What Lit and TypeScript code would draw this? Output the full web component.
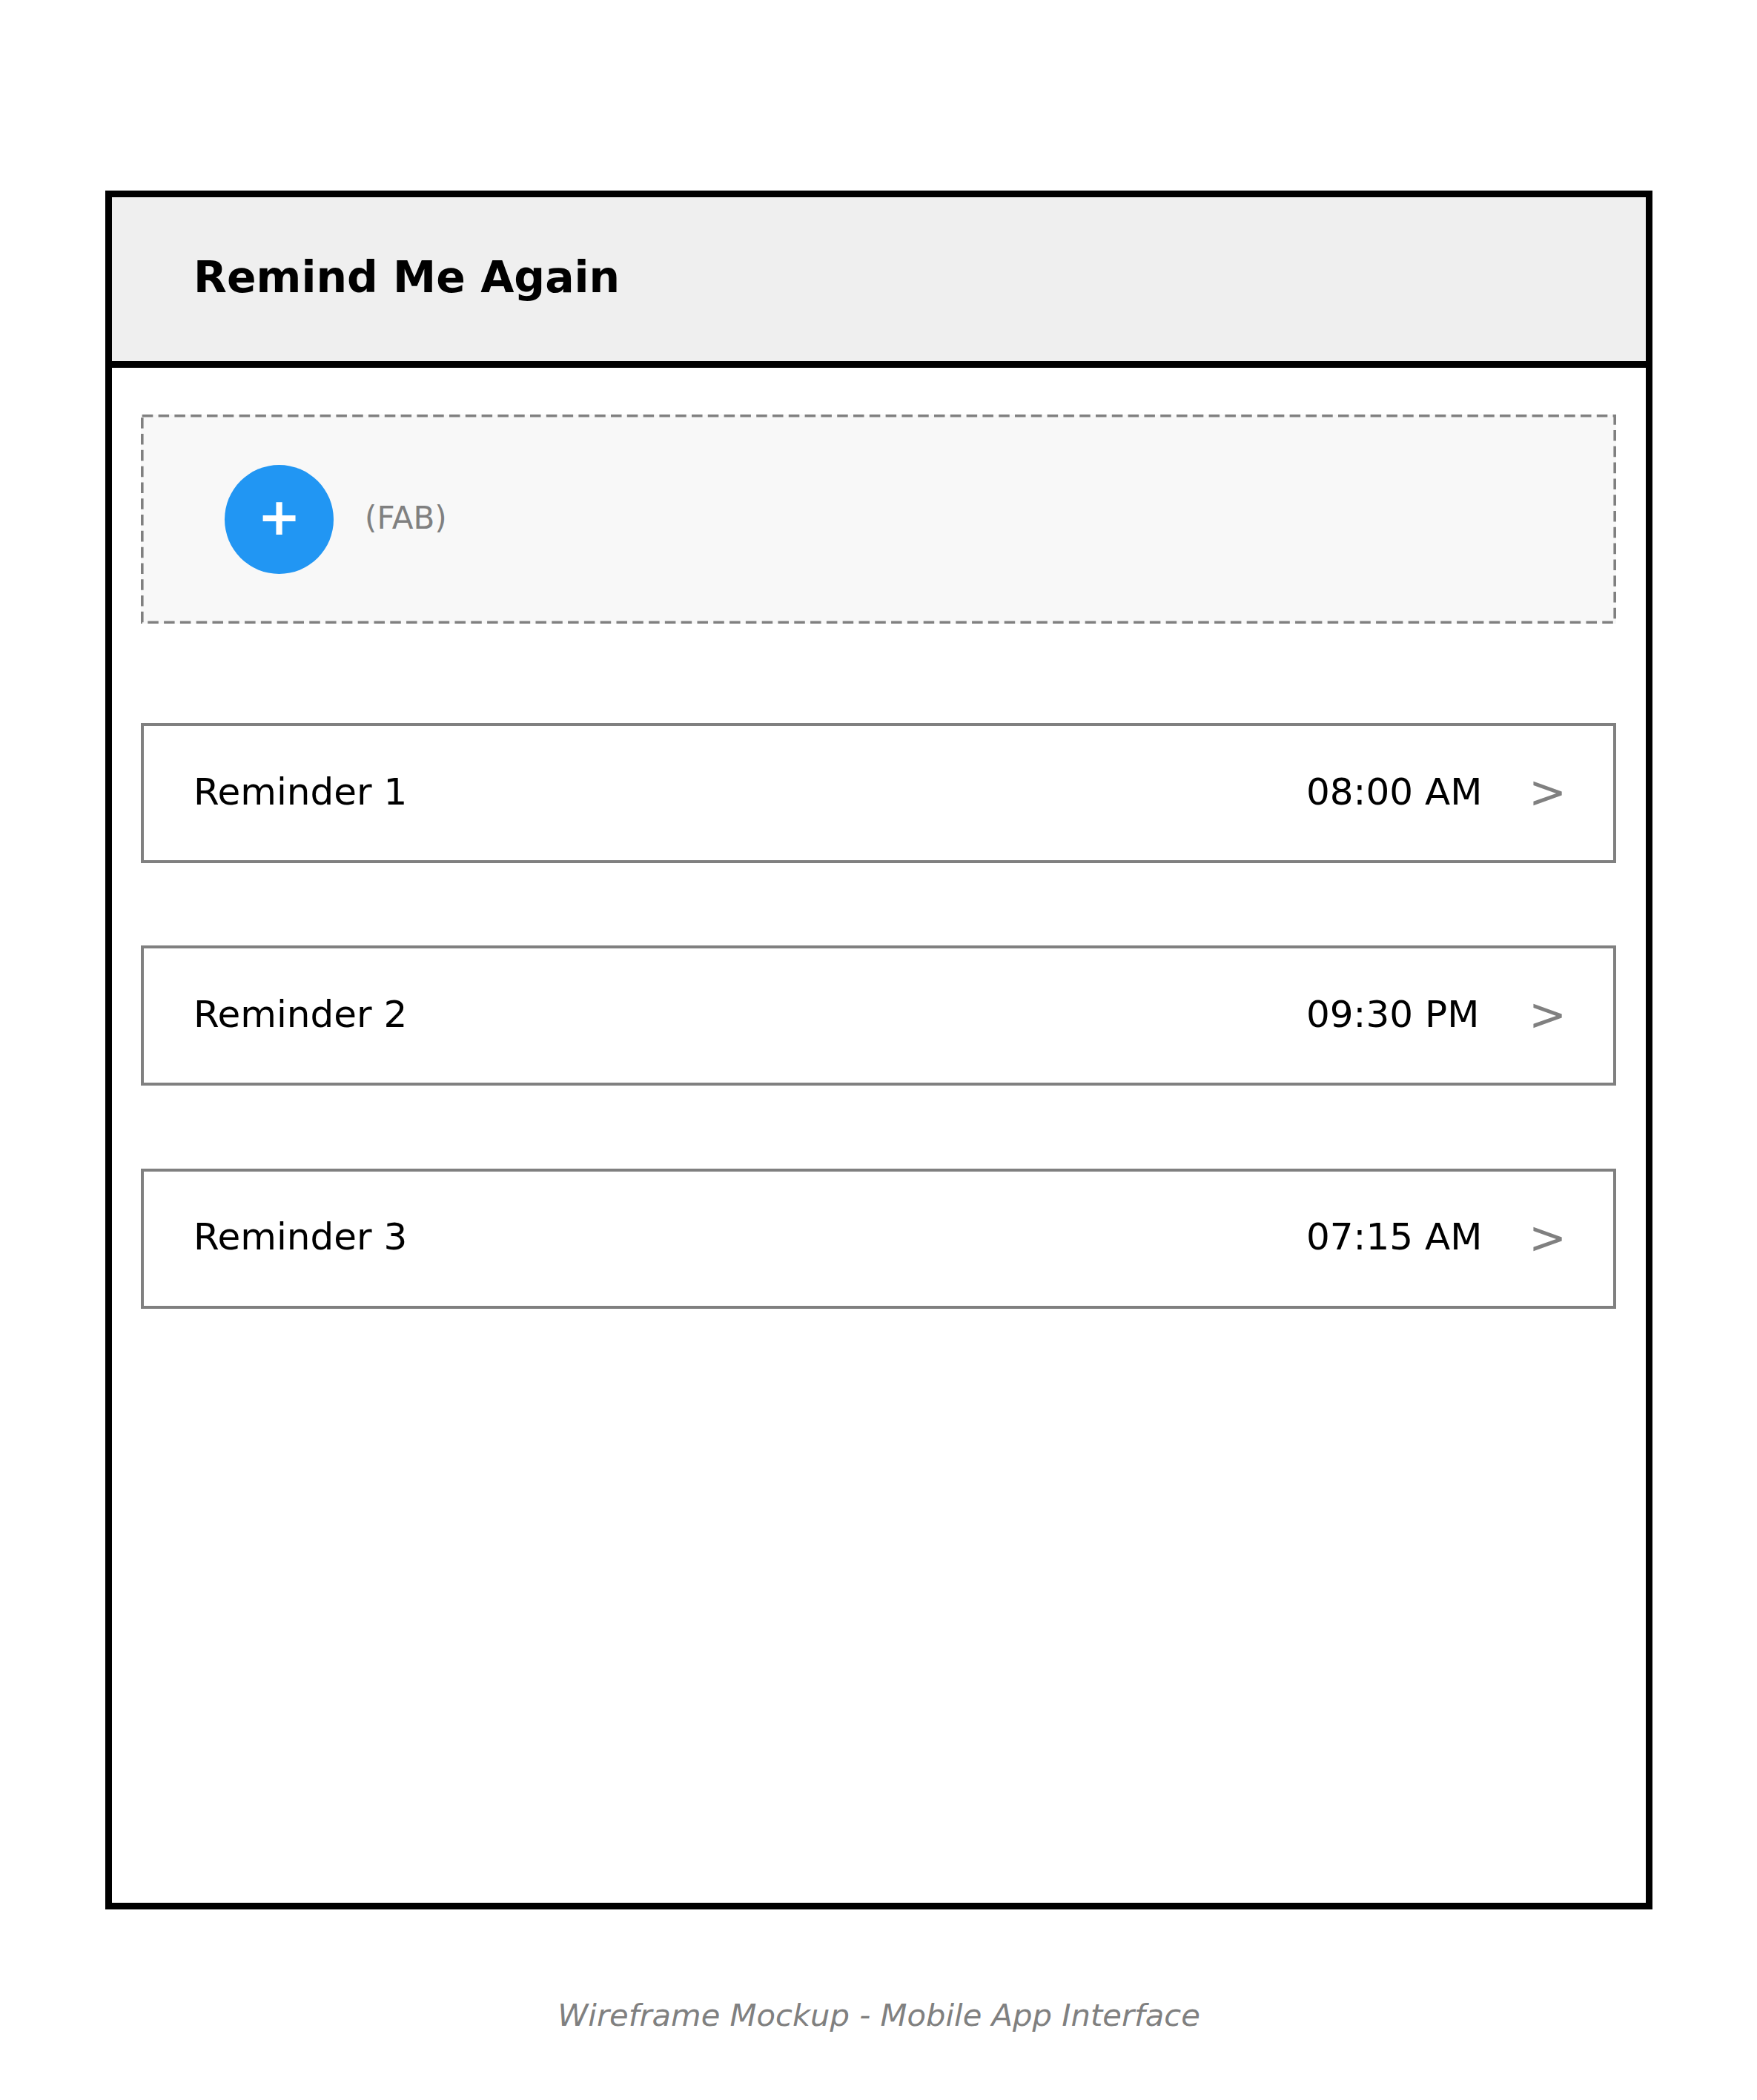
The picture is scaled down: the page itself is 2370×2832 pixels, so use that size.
import {css, html, LitElement} from 'lit';
import {customElement} from 'lit/decorators.js';

type Reminder = {
    name: string
    time: string
}

const REMINDERS: Reminder[] = [
    {name: 'Reminder 1', time: '08:00 AM'},
    {name: 'Reminder 2', time: '09:30 PM'},
    {name: 'Reminder 3', time: '07:15 AM'},
];

@customElement("app-root")
export class AppRoot extends LitElement {

    static styles = css`
        :host {
            display: block;
            width: 2370px;
            height: 2832px;
            background: #ffffff;
            color: #000000;
            font-family: "DejaVu Sans", sans-serif;
        }

        * {
            box-sizing: border-box;
        }

        .page {
            display: flex;
            flex-direction: column;
            padding: 257px 141px 0 142px;
        }

        .frame {
            display: flex;
            flex-direction: column;
            height: 2318px;
            border: 9px solid #000000;
        }

        .header {
            display: flex;
            align-items: center;
            height: 230px;
            padding: 0 0 6px 110px;
            background: #efefef;
            border-bottom: 9px solid #000000;
            font-size: 58.4px;
            font-weight: 700;
        }

        .content {
            display: flex;
            flex-direction: column;
            padding: 63px 40px 0 39px;
        }

        .panel {
            position: relative;
            display: flex;
            align-items: center;
            gap: 42px;
            height: 282px;
            padding-left: 113px;
            background: #f8f8f8;
        }

        .panel svg {
            position: absolute;
            inset: 0;
        }

        .fab {
            display: flex;
            align-items: center;
            justify-content: center;
            width: 147px;
            height: 147px;
            padding-bottom: 6px;
            border-radius: 50%;
            background: #2196f3;
            color: #ffffff;
            font-size: 70px;
            font-weight: 700;
            line-height: 1;
        }

        .fabLabel {
            padding-bottom: 4px;
            color: #808080;
            font-size: 42px;
        }

        .list {
            display: flex;
            flex-direction: column;
            gap: 111.4px;
            margin-top: 134px;
        }

        .item {
            display: grid;
            grid-template-columns: 1fr 300px 114px;
            align-items: center;
            height: 189px;
            padding-left: 67px;
            padding-bottom: 4px;
            border: 4px solid #808080;
            font-size: 50px;
        }

        .arrow {
            color: #808080;
            font-size: 61px;
        }

        .footer {
            margin-top: 118px;
            color: #808080;
            font-size: 41.7px;
            font-style: italic;
            text-align: center;
        }
    `;

    render() {
        return html`
            <div class="page">
                <div class="frame">
                    <div class="header">Remind Me Again</div>
                    <div class="content">
                        <div class="panel">
                            <svg width="1990" height="282" fill="none">
                                <rect x="1.8" y="1.8" width="1986.4" height="278.4"
                                      stroke="#808080" stroke-width="3.6" stroke-dasharray="14.53 7.27"/>
                            </svg>
                            <div class="fab">+</div>
                            <div class="fabLabel">(FAB)</div>
                        </div>
                        <div class="list">
                            ${REMINDERS.map((reminder) => html`
                                <div class="item">
                                    <div>${reminder.name}</div>
                                    <div>${reminder.time}</div>
                                    <div class="arrow">&gt;</div>
                                </div>
                            `)}
                        </div>
                    </div>
                </div>
                <div class="footer">Wireframe Mockup - Mobile App Interface</div>
            </div>
        `
    }
}
